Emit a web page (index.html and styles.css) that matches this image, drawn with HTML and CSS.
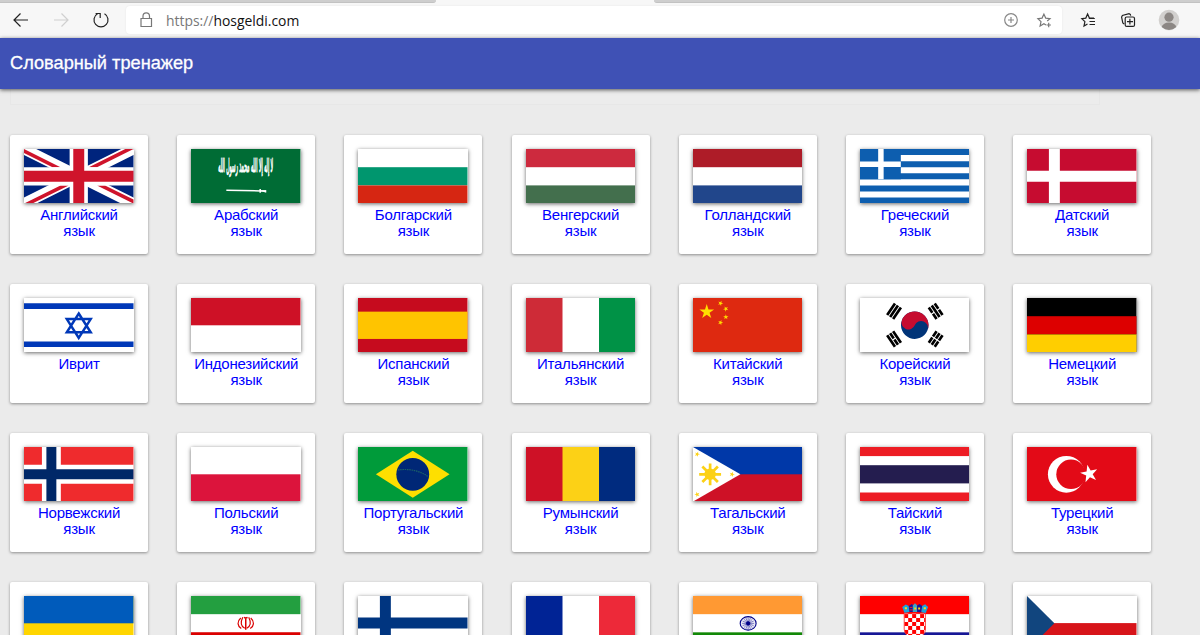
FILE: index.html
```html
<!DOCTYPE html>
<html lang="ru">
<head>
    <meta charset="UTF-8">
    <meta name="viewport" content="width=device-width, initial-scale=1.0">
    <title>Словарный тренажер</title>
    <link rel="stylesheet" href="styles.css">
</head>
<body>
    <svg class="defs" width="0" height="0">
        <defs>
            <polygon id="star" points="0,-1 .225,-.309 .951,-.309 .363,.118 .588,.809 0,.382 -.588,.809 -.363,.118 -.951,-.309 -.225,-.309"/>
            <g id="spokes"><path d="M0-6V6M-6 0H6M-4.2-4.2 4.2 4.2M-4.2 4.2 4.2-4.2M-2.3-5.5 2.3 5.5M-5.5-2.3 5.5 2.3M2.3-5.5-2.3 5.5M5.5-2.3-5.5 2.3"/></g>
            <pattern id="check" width="8" height="8" patternUnits="userSpaceOnUse" x="44.4" y="18.2">
                <rect width="8" height="8" fill="#fff"/>
                <path d="M0 0h4v4H0zM4 4h4v4H4z" fill="#f00"/>
            </pattern>
        </defs>
    </svg>

    <div class="browser">
        <div class="tabs"><span class="tab tab-left"></span><span class="tab tab-right"></span></div>
        <div class="toolbar">
            <svg class="nav-icons" width="126" height="34" viewBox="0 4 126 34">
                <path d="M28 20H14.5M20.5 13.5 14 20l6.5 6.5" stroke="#222"/>
                <path d="M54 20h13.5M61.5 13.5 68 20l-6.5 6.5" stroke="#d0d0d0"/>
                <path d="M97.5 13.8A7 7 0 1 0 104.5 13.8M95.6 13.5h4.6v4.6" stroke="#222"/>
            </svg>
            <div class="address">
                <svg width="40" height="28" viewBox="126 6 40 28">
                    <path d="M141 18.5h10.5v8H141zM143 18.5v-2.3a3.2 3.2 0 0 1 6.5 0v2.3" stroke="#777"/>
                </svg>
                <span class="url"><span class="scheme">https://</span>hosgeldi.com</span>
                <svg class="address-icons" width="66" height="28" viewBox="996 6 66 28">
                    <circle cx="1011" cy="20" r="6.3" stroke="#888"/>
                    <path d="M1008 20h6M1011 17v6" stroke="#888"/>
                    <path d="M1047.2 21 1050 18.6 1045.7 18.1 1043.9 14.1 1042.1 18.1 1037.9 18.6 1041 21.6 1040.1 26 1043.9 23.8 1046 25M1048.7 22.8v4.4M1046.5 25h4.4" stroke="#777"/>
                </svg>
            </div>
            <svg class="menu-icons" width="138" height="34" viewBox="1062 4 138 34">
                <path d="M1094 18.2 1089.4 18.1 1087.6 14 1085.8 18.1 1081.8 18.6 1084.9 21.6 1084 26 1087.5 23.9M1088.8 18.5h6M1089.5 21.5h5.5M1089.5 24.5h5.5" stroke="#222"/>
                <rect x="1125.2" y="17" width="9.3" height="9.4" rx="1.5" stroke="#222"/>
                <path d="M1124.2 24 1122.8 22.9 1121.6 17 1122.4 15.4 1129 13.7 1130.3 14.4 1130.7 15.6M1127 21.6h6M1129.9 18.8v5.8" stroke="#222"/>
                <circle cx="1169" cy="20" r="10.3" fill="#d2d0ce"/>
                <circle cx="1169" cy="17.2" r="4.6" fill="#8c8784"/>
                <path d="M1161.8 27a7.2 4.4 0 0 1 14.4 0 10.2 10.2 0 0 1-14.4 0z" fill="#8c8784"/>
            </svg>
        </div>
    </div>

    <header class="header">Словарный тренажер</header>
    <div class="panel"></div>

    <main class="languages">
        <a class="card" href="#">
            <svg class="flag" viewBox="0 0 60 30" preserveAspectRatio="none">
                <rect width="60" height="30" fill="#00247d"/>
                <path d="M0 0 60 30M60 0 0 30" stroke="#fff" stroke-width="6"/>
                <path d="M0 0v2.2L15.6 10H20zM60 0h-4.5l-20 10H40zM60 30v-2.2L44.4 20H40zM0 30h4.5l20-10H20z" fill="#cf142b"/>
                <path d="M30 0v30M0 15h60" stroke="#fff" stroke-width="10"/>
                <path d="M30 0v30M0 15h60" stroke="#cf142b" stroke-width="6"/>
            </svg>
            <span>Английский<br>язык</span>
        </a>
        <a class="card" href="#">
            <svg class="flag" viewBox="0 0 110 55" preserveAspectRatio="none">
                <rect width="110" height="55" fill="#006c35"/>
                <text class="shahada" transform="translate(55 23) scale(.52 1.4)" textLength="106" lengthAdjust="spacingAndGlyphs">لا إله إلا الله محمد رسول الله</text>
                <path d="M35.5 41.5 70 42.2M69.5 40.2v4M70 42.2h5.5" stroke="#fff" stroke-width="1.5" fill="none"/>
                <path d="M68 41.5h7.5v2.6z" fill="#fff"/>
            </svg>
            <span>Арабский<br>язык</span>
        </a>
        <a class="card" href="#">
            <svg class="flag" viewBox="0 0 3 3" preserveAspectRatio="none">
                <rect width="3" height="3" fill="#fff"/>
                <rect y="1" width="3" height="1" fill="#00966e"/>
                <rect y="2" width="3" height="1" fill="#d62612"/>
            </svg>
            <span>Болгарский<br>язык</span>
        </a>
        <a class="card" href="#">
            <svg class="flag" viewBox="0 0 3 3" preserveAspectRatio="none">
                <rect width="3" height="3" fill="#fff"/>
                <rect width="3" height="1" fill="#cd2a3e"/>
                <rect y="2" width="3" height="1" fill="#436f4d"/>
            </svg>
            <span>Венгерский<br>язык</span>
        </a>
        <a class="card" href="#">
            <svg class="flag" viewBox="0 0 3 3" preserveAspectRatio="none">
                <rect width="3" height="3" fill="#fff"/>
                <rect width="3" height="1" fill="#ae1c28"/>
                <rect y="2" width="3" height="1" fill="#21468b"/>
            </svg>
            <span>Голландский<br>язык</span>
        </a>
        <a class="card" href="#">
            <svg class="flag" viewBox="0 0 110 54" preserveAspectRatio="none">
                <rect width="110" height="54" fill="#0d5eaf"/>
                <path d="M0 9h110M0 21h110M0 33h110M0 45h110" stroke="#fff" stroke-width="6"/>
                <rect width="41" height="30" fill="#0d5eaf"/>
                <path d="M0 15h41M21 0v30" stroke="#fff" stroke-width="5.5"/>
            </svg>
            <span>Греческий<br>язык</span>
        </a>
        <a class="card" href="#">
            <svg class="flag" viewBox="0 0 110 55" preserveAspectRatio="none">
                <rect width="110" height="55" fill="#c60c30"/>
                <path d="M27.5 0v55M0 27.5h110" stroke="#fff" stroke-width="11"/>
            </svg>
            <span>Датский<br>язык</span>
        </a>

        <a class="card" href="#">
            <svg class="flag" viewBox="0 0 110 55" preserveAspectRatio="none">
                <rect width="110" height="55" fill="#fff"/>
                <path d="M0 8.2h110M0 46.5h110" stroke="#0038b8" stroke-width="5.6"/>
                <path d="M55 15.6 67 34.6H43zM55 40.2 67 21.2H43z" stroke="#0038b8" stroke-width="2.5" fill="none"/>
            </svg>
            <span>Иврит</span>
        </a>
        <a class="card" href="#">
            <svg class="flag" viewBox="0 0 2 2" preserveAspectRatio="none">
                <rect width="2" height="2" fill="#fff"/>
                <rect width="2" height="1" fill="#ce1126"/>
            </svg>
            <span>Индонезийский<br>язык</span>
        </a>
        <a class="card" href="#">
            <svg class="flag" viewBox="0 0 4 4" preserveAspectRatio="none">
                <rect width="4" height="4" fill="#c60b1e"/>
                <rect y="1" width="4" height="2" fill="#ffc400"/>
            </svg>
            <span>Испанский<br>язык</span>
        </a>
        <a class="card" href="#">
            <svg class="flag" viewBox="0 0 3 3" preserveAspectRatio="none">
                <rect width="3" height="3" fill="#fff"/>
                <rect width="1" height="3" fill="#ce2b37"/>
                <rect x="2" width="1" height="3" fill="#009246"/>
            </svg>
            <span>Итальянский<br>язык</span>
        </a>
        <a class="card" href="#">
            <svg class="flag" viewBox="0 0 110 55" preserveAspectRatio="none">
                <rect width="110" height="55" fill="#de2910"/>
                <g fill="#ffde00">
                    <use href="#star" transform="translate(13.8 13.9) scale(7.8)"/>
                    <use href="#star" transform="translate(27.6 5.4) rotate(23) scale(2.8)"/>
                    <use href="#star" transform="translate(33 11) rotate(45) scale(2.8)"/>
                    <use href="#star" transform="translate(33 19.2) scale(2.8)"/>
                    <use href="#star" transform="translate(27.6 24.8) rotate(20) scale(2.8)"/>
                </g>
            </svg>
            <span>Китайский<br>язык</span>
        </a>
        <a class="card" href="#">
            <svg class="flag" viewBox="0 0 110 55" preserveAspectRatio="none">
                <rect width="110" height="55" fill="#fff"/>
                <g transform="translate(55 27.4) rotate(22)">
                    <circle r="13.8" fill="#003478"/>
                    <path d="M-13.8 0a13.8 13.8 0 0 1 27.6 0A6.9 6.9 0 0 0 0 0 6.9 6.9 0 0 1-13.8 0z" fill="#c60c30"/>
                </g>
                <g stroke="#000" stroke-width="2.7">
                    <path d="M-7-3.6H7M-7 0H7M-7 3.6H7" transform="translate(34.2 13.3) rotate(-56)"/>
                    <path d="M-7-3.6h6.4M.6-3.6H7M-7 0H7M-7 3.6h6.4M.6 3.6H7" transform="translate(76 13.3) rotate(56)"/>
                    <path d="M-7-3.6H7M-7 0h6.4M.6 0H7M-7 3.6H7" transform="translate(34.2 41.2) rotate(56)"/>
                    <path d="M-7-3.6h6.4M.6-3.6H7M-7 0h6.4M.6 0H7M-7 3.6h6.4M.6 3.6H7" transform="translate(76 41.2) rotate(-56)"/>
                </g>
            </svg>
            <span>Корейский<br>язык</span>
        </a>
        <a class="card" href="#">
            <svg class="flag" viewBox="0 0 3 3" preserveAspectRatio="none">
                <rect width="3" height="3" fill="#000"/>
                <rect y="1" width="3" height="1" fill="#d00"/>
                <rect y="2" width="3" height="1" fill="#ffce00"/>
            </svg>
            <span>Немецкий<br>язык</span>
        </a>

        <a class="card" href="#">
            <svg class="flag" viewBox="0 0 110 55" preserveAspectRatio="none">
                <rect width="110" height="55" fill="#ef2b2d"/>
                <path d="M27.5 0v55M0 27.5h110" stroke="#fff" stroke-width="19"/>
                <path d="M27.5 0v55M0 27.5h110" stroke="#002868" stroke-width="10"/>
            </svg>
            <span>Норвежский<br>язык</span>
        </a>
        <a class="card" href="#">
            <svg class="flag" viewBox="0 0 2 2" preserveAspectRatio="none">
                <rect width="2" height="2" fill="#fff"/>
                <rect y="1" width="2" height="1" fill="#dc143c"/>
            </svg>
            <span>Польский<br>язык</span>
        </a>
        <a class="card" href="#">
            <svg class="flag" viewBox="0 0 110 55" preserveAspectRatio="none">
                <rect width="110" height="55" fill="#009b3a"/>
                <path d="M18 27.5 55 3.8l37 23.7L55 51.2z" fill="#fedf00"/>
                <circle cx="55" cy="27.5" r="16.5" fill="#002776"/>
                <path d="M40 23.2q17-2.5 30.5 6.5" stroke="#1c6267" stroke-width="1.2" stroke-dasharray="1.5 .8" fill="none"/>
            </svg>
            <span>Португальский<br>язык</span>
        </a>
        <a class="card" href="#">
            <svg class="flag" viewBox="0 0 3 3" preserveAspectRatio="none">
                <rect width="3" height="3" fill="#fcd116"/>
                <rect width="1" height="3" fill="#ce1126"/>
                <rect x="2" width="1" height="3" fill="#002b7f"/>
            </svg>
            <span>Румынский<br>язык</span>
        </a>
        <a class="card" href="#">
            <svg class="flag" viewBox="0 0 110 55" preserveAspectRatio="none">
                <rect width="110" height="55" fill="#0038a8"/>
                <rect y="27.5" width="110" height="27.5" fill="#ce1126"/>
                <path d="M0 0l47.6 27.5L0 55z" fill="#fff"/>
                <g fill="#fcd116">
                    <circle cx="17.2" cy="27.5" r="5.8"/>
                    <use href="#star" transform="translate(4.2 7.2) rotate(20) scale(2.8)"/>
                    <use href="#star" transform="translate(39.2 27.5) rotate(18) scale(2.8)"/>
                    <use href="#star" transform="translate(4.2 47.8) rotate(-20) scale(2.8)"/>
                </g>
                <path d="M0-11V11M-11 0H11M-7.8-7.8 7.8 7.8M-7.8 7.8 7.8-7.8" transform="translate(17.2 27.5)" stroke="#fcd116" stroke-width="2.7"/>
            </svg>
            <span>Тагальский<br>язык</span>
        </a>
        <a class="card" href="#">
            <svg class="flag" viewBox="0 0 6 6" preserveAspectRatio="none">
                <rect width="6" height="6" fill="#ed1c24"/>
                <rect y="1" width="6" height="4" fill="#fff"/>
                <rect y="2" width="6" height="2" fill="#241d4f"/>
            </svg>
            <span>Тайский<br>язык</span>
        </a>
        <a class="card" href="#">
            <svg class="flag" viewBox="0 0 110 55" preserveAspectRatio="none">
                <rect width="110" height="55" fill="#e30a17"/>
                <circle cx="39.5" cy="27.5" r="18.5" fill="#fff"/>
                <circle cx="44.2" cy="27.5" r="14.8" fill="#e30a17"/>
                <use href="#star" transform="translate(62.5 27) rotate(-84) scale(9.2)" fill="#fff"/>
            </svg>
            <span>Турецкий<br>язык</span>
        </a>

        <a class="card" href="#">
            <svg class="flag" viewBox="0 0 2 2" preserveAspectRatio="none">
                <rect width="2" height="2" fill="#ffd500"/>
                <rect width="2" height="1" fill="#005bbb"/>
            </svg>
            <span>Украинский<br>язык</span>
        </a>
        <a class="card" href="#">
            <svg class="flag" viewBox="0 0 110 55" preserveAspectRatio="none">
                <rect width="110" height="55" fill="#fff"/>
                <rect width="110" height="18.3" fill="#239f40"/>
                <rect y="36.5" width="110" height="18.5" fill="#da0000"/>
                <path d="M50 22.2c-4 3.5-3.5 8 .5 10.5M60 22.2c4 3.5 3.5 8-.5 10.5M52 21.5c-2.2 4.5-2 9 2 11M58 21.5c2.2 4.5 2 9-2 11" stroke="#da0000" stroke-width="1.2" fill="none"/>
                <path d="M55 22.5v11.5M53.2 21.5q1.8 1.2 3.6 0" stroke="#da0000" stroke-width="1.5" fill="none"/>
            </svg>
            <span>Фарси</span>
        </a>
        <a class="card" href="#">
            <svg class="flag" viewBox="0 0 110 55" preserveAspectRatio="none">
                <rect width="110" height="55" fill="#fff"/>
                <path d="M27.5 0v55M0 27.2h110" stroke="#003580" stroke-width="11"/>
            </svg>
            <span>Финский<br>язык</span>
        </a>
        <a class="card" href="#">
            <svg class="flag" viewBox="0 0 3 3" preserveAspectRatio="none">
                <rect width="3" height="3" fill="#fff"/>
                <rect width="1" height="3" fill="#002395"/>
                <rect x="2" width="1" height="3" fill="#ed2939"/>
            </svg>
            <span>Французский<br>язык</span>
        </a>
        <a class="card" href="#">
            <svg class="flag" viewBox="0 0 110 55" preserveAspectRatio="none">
                <rect width="110" height="55" fill="#fff"/>
                <rect width="110" height="18.3" fill="#f93"/>
                <rect y="36.6" width="110" height="18.4" fill="#128807"/>
                <g transform="translate(55.4 27.6)" stroke="#000088">
                    <ellipse rx="8" ry="6.8" fill="#e8e8f6" stroke-width="1.1"/>
                    <use href="#spokes" stroke-width=".45"/>
                    <circle r="1.7" fill="#000088"/>
                </g>
            </svg>
            <span>Хинди</span>
        </a>
        <a class="card" href="#">
            <svg class="flag" viewBox="0 0 110 55" preserveAspectRatio="none">
                <rect width="110" height="55" fill="#fff"/>
                <rect width="110" height="18.3" fill="#f00"/>
                <rect y="36.6" width="110" height="18.4" fill="#171796"/>
                <path d="M44.4 17.5h21.4v16a10.7 9 0 0 1-21.4 0z" fill="url(#check)" stroke="#f33" stroke-width=".8"/>
                <path d="M44.6 17 42.4 11l3.6-2.4 3 1.6.8 6z" fill="#1ba4dd"/>
                <path d="M49.8 16.2 49 10l3-2 2 1.6-.5 6.4z" fill="#171796"/>
                <path d="M53 16V9.6l2.2-2.2 2.4 2.2V16z" fill="#3aa7c9"/>
                <path d="M57.4 16V9.6l2.4-1.6 2.8 2-1 6.3z" fill="#171796"/>
                <path d="M61.6 16.3 62.4 10l3-1.6 3 2.6-2.4 6.2z" fill="#1ba4dd"/>
                <path d="M45 12.4h2.2M54.5 12.6h2M64 12.4h2.2M58.4 12.6h2" stroke="#f7db17" stroke-width="2"/>
                <path d="M49.8 11.5h3M49.8 14h3.4" stroke="#d22" stroke-width="1"/>
            </svg>
            <span>Хорватский<br>язык</span>
        </a>
        <a class="card" href="#">
            <svg class="flag" viewBox="0 0 110 55" preserveAspectRatio="none">
                <rect width="110" height="55" fill="#fff"/>
                <rect y="27.3" width="110" height="27.7" fill="#d7141a"/>
                <path d="M0 0l27.5 27.5L0 55z" fill="#11457e"/>
            </svg>
            <span>Чешский<br>язык</span>
        </a>
    </main>
</body>
</html>
```

FILE: styles.css
```css
* {
    box-sizing: border-box;
}

body {
    margin: 0;
    height: 635px;
    overflow: hidden;
    background-color: #ebebeb;
    font-family: Arial, "Liberation Sans", sans-serif;
}

svg {
    display: block;
    flex: none;
}

.defs {
    position: absolute;
}

/* browser bar */
.browser {
    height: 38px;
    background-color: #f7f7f7;
}

.tabs {
    display: flex;
    justify-content: space-between;
    height: 3px;
}

.tab {
    background-color: #cecece;
    border-bottom: 1px solid #c2c2c2;
}

.tab-left {
    width: 436px;
    border-bottom-right-radius: 3px;
}

.tab-right {
    width: 546px;
    border-bottom-left-radius: 3px;
}

.toolbar {
    display: flex;
    align-items: flex-start;
    height: 35px;
    padding-top: 1px;
}

.toolbar svg {
    fill: none;
    stroke-width: 1.2;
}

.address {
    display: flex;
    align-items: center;
    width: 936px;
    height: 28px;
    margin-top: 2px;
    background-color: white;
    border-radius: 4px;
    box-shadow: 0 0 2px rgba(0, 0, 0, 0.08);
}

.url {
    font-family: "Open Sans", "Noto Sans", sans-serif;
    font-size: 13.9px;
    color: #111;
}

.scheme {
    color: #777;
}

.address-icons {
    margin-left: auto;
}

/* page */
.header {
    position: relative;
    height: 51px;
    padding-left: 10px;
    line-height: 50px;
    font-size: 18.2px;
    color: white;
    -webkit-text-stroke: 0.3px white;
    background-color: #3f51b5;
    box-shadow: 0 1px 4px rgba(0, 0, 0, 0.65);
}

.panel {
    width: 1090px;
    height: 16px;
    margin-left: 10px;
    border: 1px solid #e7e7e7;
    border-top: none;
    background-color: #ececec;
}

.languages {
    display: grid;
    grid-template-columns: repeat(7, 138px);
    grid-auto-rows: 119.5px;
    gap: 29.5px 29.2px;
    padding: 29.5px 10px 0;
}

.card {
    padding: 14.4px 14px 0;
    background-color: white;
    border-radius: 2px;
    box-shadow: 0 1px 3px rgba(0, 0, 0, 0.4);
    text-align: center;
    text-decoration: none;
    font-size: 15px;
    letter-spacing: -0.22px;
    line-height: 16px;
    color: blue;
}

.card span {
    display: block;
    padding-top: 4px;
}

.flag {
    width: 109.5px;
    height: 54.6px;
    box-shadow: 0 1px 4px rgba(0, 0, 0, 0.6);
}

.shahada {
    fill: white;
    stroke: white;
    stroke-width: 0.8px;
    font-family: "DejaVu Sans", sans-serif;
    font-size: 13px;
    letter-spacing: 0;
    text-anchor: middle;
}
```
